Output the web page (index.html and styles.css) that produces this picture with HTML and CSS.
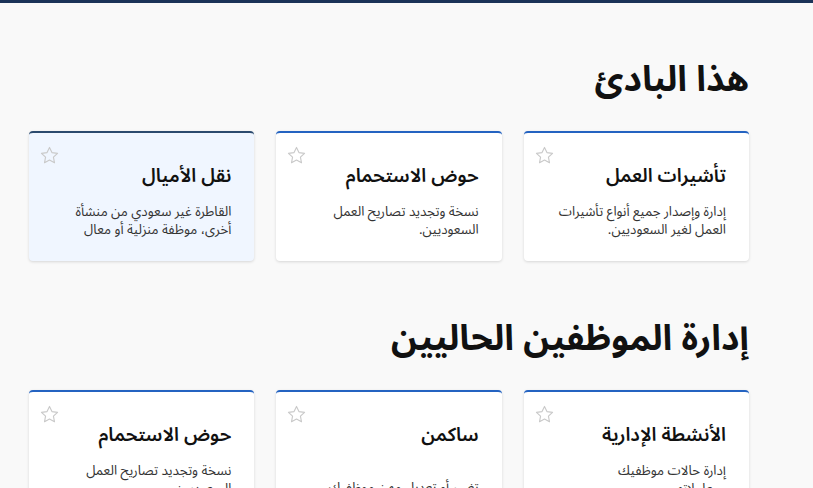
FILE: index.html
```html
<!DOCTYPE html>
<html lang="ar" dir="rtl">
<head>
    <meta charset="UTF-8">
    <meta name="viewport" content="width=device-width, initial-scale=1.0">
    <title>الخدمات</title>
    <link rel="stylesheet" href="styles.css">
</head>
<body>
    <div class="top-bar"></div>

    <main class="page">
        <section class="group">
            <h2 class="group-title">هذا البادئ</h2>
            <div class="cards">
                <div class="card">
                    <svg class="star" viewBox="0 0 24 24"><path d="M12 2.8l2.8 5.9 6.4.8-4.7 4.4 1.2 6.4L12 17.2l-5.7 3.1 1.2-6.4-4.7-4.4 6.4-.8z"/></svg>
                    <h3>تأشيرات العمل</h3>
                    <p>إدارة وإصدار جميع أنواع تأشيرات العمل لغير السعوديين.</p>
                </div>
                <div class="card">
                    <svg class="star" viewBox="0 0 24 24"><path d="M12 2.8l2.8 5.9 6.4.8-4.7 4.4 1.2 6.4L12 17.2l-5.7 3.1 1.2-6.4-4.7-4.4 6.4-.8z"/></svg>
                    <h3>حوض الاستحمام</h3>
                    <p>نسخة وتجديد تصاريح العمل السعوديين.</p>
                </div>
                <div class="card active">
                    <svg class="star" viewBox="0 0 24 24"><path d="M12 2.8l2.8 5.9 6.4.8-4.7 4.4 1.2 6.4L12 17.2l-5.7 3.1 1.2-6.4-4.7-4.4 6.4-.8z"/></svg>
                    <h3>نقل الأميال</h3>
                    <p>القاطرة غير سعودي من منشأة أخرى، موظفة منزلية أو معال</p>
                </div>
            </div>
        </section>

        <section class="group">
            <h2 class="group-title">إدارة الموظفين الحاليين</h2>
            <div class="cards">
                <div class="card">
                    <svg class="star" viewBox="0 0 24 24"><path d="M12 2.8l2.8 5.9 6.4.8-4.7 4.4 1.2 6.4L12 17.2l-5.7 3.1 1.2-6.4-4.7-4.4 6.4-.8z"/></svg>
                    <h3>الأنشطة الإدارية</h3>
                    <p>إدارة حالات موظفيك<br>ومعاملاتهم</p>
                </div>
                <div class="card">
                    <svg class="star" viewBox="0 0 24 24"><path d="M12 2.8l2.8 5.9 6.4.8-4.7 4.4 1.2 6.4L12 17.2l-5.7 3.1 1.2-6.4-4.7-4.4 6.4-.8z"/></svg>
                    <h3 class="tall">ساكمن</h3>
                    <p>تغيير أو تعديل مهن موظفيك</p>
                </div>
                <div class="card">
                    <svg class="star" viewBox="0 0 24 24"><path d="M12 2.8l2.8 5.9 6.4.8-4.7 4.4 1.2 6.4L12 17.2l-5.7 3.1 1.2-6.4-4.7-4.4 6.4-.8z"/></svg>
                    <h3>حوض الاستحمام</h3>
                    <p>نسخة وتجديد تصاريح العمل السعوديين.</p>
                </div>
            </div>
        </section>
    </main>
</body>
</html>
```

FILE: styles.css
```css
body {
    margin: 0;
    font-family: "Noto Sans Arabic", "Noto Kufi Arabic", "DejaVu Sans", sans-serif;
    background-color: #f9f9f9;
    color: #111;
}

.top-bar {
    height: 3px;
    background-color: #1b3358;
}

.page {
    padding: 0 64px 40px 29px;
}

.group {
    padding-top: 51px;
}

.group + .group {
    padding-top: 52px;
}

.group-title {
    margin: 0 0 26px;
    font-size: 35.5px;
    font-weight: bold;
    line-height: 51px;
}

.cards {
    display: grid;
    grid-template-columns: repeat(3, 1fr);
    gap: 22px;
}

.card {
    position: relative;
    min-height: 130px;
    box-sizing: border-box;
    padding: 29px 23px 18px 30px;
    background-color: #ffffff;
    border-top: 2px solid #2463c1;
    border-radius: 4px;
    box-shadow: 0 1px 3px rgba(0, 0, 0, 0.14);
}

.card.active {
    background-color: #f0f6ff;
    border-top-color: #2b4a6e;
}

.star {
    position: absolute;
    top: 12px;
    left: 10px;
    width: 21px;
    height: 21px;
    fill: none;
    stroke: #c9c9c9;
    stroke-width: 1.3;
    stroke-linejoin: round;
}

.card h3 {
    margin: 0 0 13px;
    font-size: 19px;
    font-weight: 600;
    line-height: 28px;
}

.card h3.tall {
    margin-bottom: 30px;
}

.card p {
    margin: 0;
    font-size: 13.3px;
    line-height: 18px;
    color: #333;
}
```
